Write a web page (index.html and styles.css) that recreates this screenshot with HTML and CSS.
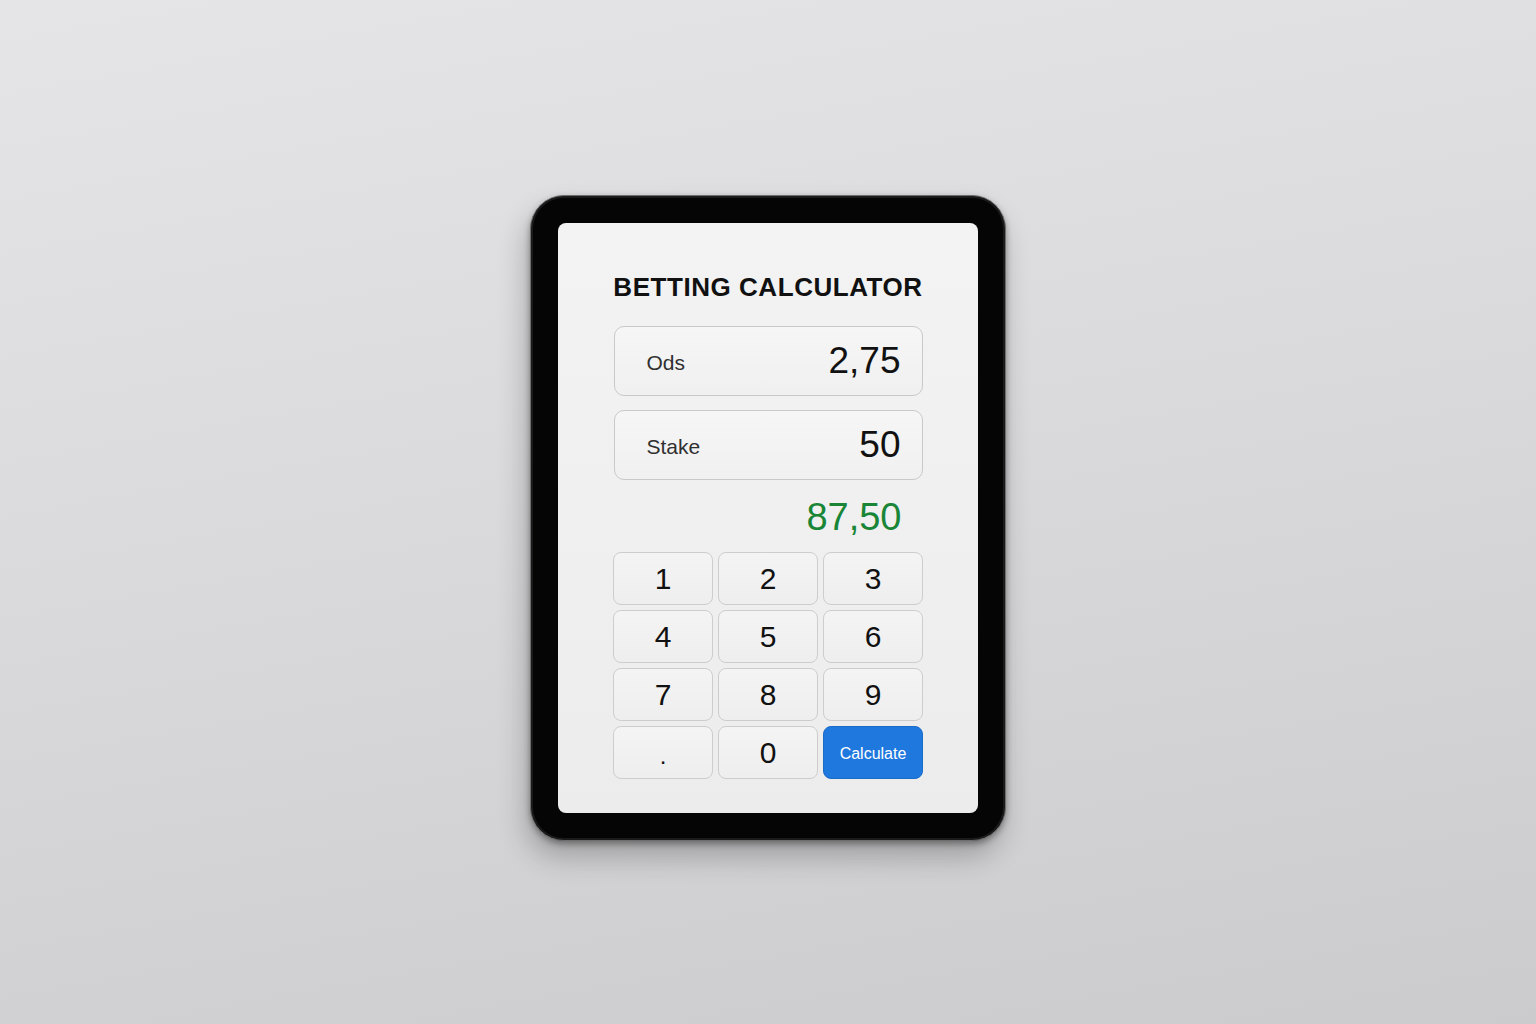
FILE: index.html
```html
<!DOCTYPE html>
<html lang="en">
<head>
    <meta charset="UTF-8">
    <title>Betting Calculator</title>
    <link rel="stylesheet" href="styles.css">
</head>
<body>
    <div class="stage">
        <div class="tablet">
            <div class="screen">
                <h1 class="title">BETTING CALCULATOR</h1>

                <div class="fields">
                    <div class="field">
                        <span class="label">Ods</span>
                        <span class="value">2,75</span>
                    </div>
                    <div class="field">
                        <span class="label">Stake</span>
                        <span class="value">50</span>
                    </div>
                </div>

                <div class="result">87,50</div>

                <div class="keypad">
                    <button class="key">1</button>
                    <button class="key">2</button>
                    <button class="key">3</button>
                    <button class="key">4</button>
                    <button class="key">5</button>
                    <button class="key">6</button>
                    <button class="key">7</button>
                    <button class="key">8</button>
                    <button class="key">9</button>
                    <button class="key dot">.</button>
                    <button class="key">0</button>
                    <button class="key calc">Calculate</button>
                </div>
            </div>
        </div>
    </div>
</body>
</html>
```

FILE: styles.css
```css
html, body {
    margin: 0;
    height: 100%;
}

body {
    font-family: "Liberation Sans", Arial, sans-serif;
    background: linear-gradient(170deg, #e5e5e7 0%, #dadadc 45%, #cbcbcd 100%);
}

.stage {
    height: 100%;
    display: flex;
    justify-content: center;
    align-items: flex-start;
    padding-top: 195px;
    box-sizing: border-box;
}

.tablet {
    padding: 27px;
    background: #050505;
    border: 1px solid #6e6e6e;
    border-radius: 34px;
    box-shadow:
        inset 0 0 0 2px #1a1a1a,
        0 3px 6px rgba(0, 0, 0, 0.35),
        -4px 16px 28px rgba(0, 0, 0, 0.24);
}

.screen {
    width: 420px;
    height: 590px;
    box-sizing: border-box;
    padding-top: 48px;
    background: linear-gradient(180deg, #f3f3f3 0%, #efefef 60%, #ececec 100%);
    border-radius: 8px;
    display: flex;
    flex-direction: column;
    align-items: center;
}

.title {
    margin: 0 0 23px;
    font-size: 26px;
    line-height: 32px;
    font-weight: bold;
    letter-spacing: 0.55px;
    color: #111;
}

.fields {
    display: flex;
    flex-direction: column;
    gap: 14px;
}

.field {
    width: 309px;
    height: 70px;
    box-sizing: border-box;
    padding: 0 21px 0 32px;
    display: flex;
    align-items: center;
    justify-content: space-between;
    background: linear-gradient(180deg, #f6f6f6, #f0f0f0);
    border: 1px solid #c9c9c9;
    border-radius: 10px;
}

.label {
    font-size: 21px;
    color: #303030;
    padding-top: 3px;
}

.value {
    font-size: 37px;
    color: #111;
}

.result {
    width: 309px;
    box-sizing: border-box;
    margin: 15px 0 13px;
    padding-right: 21px;
    text-align: right;
    font-size: 38px;
    line-height: 44px;
    color: #198537;
}

.keypad {
    width: 310px;
    display: grid;
    grid-template-columns: repeat(3, 1fr);
    grid-auto-rows: 53px;
    gap: 5px;
}

.key {
    font-family: inherit;
    font-size: 30px;
    color: #111;
    background: linear-gradient(180deg, #f4f4f4, #eeeeee);
    border: 1px solid #cdcdcd;
    border-radius: 8px;
    padding: 0;
    cursor: pointer;
}

.key.dot {
    padding-top: 6px;
    font-size: 24px;
}

.key.calc {
    font-size: 16px;
    color: #fff;
    background: #1f78de;
    border-color: #1a6cc9;
    padding-top: 2px;
}
```
